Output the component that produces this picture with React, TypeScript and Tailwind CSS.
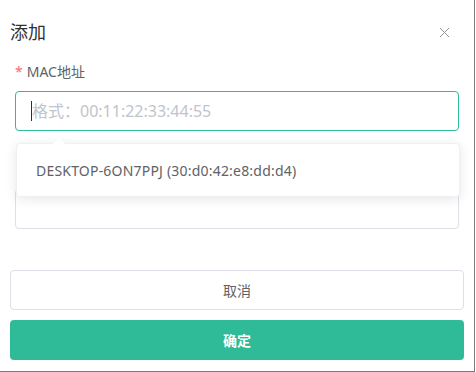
import { X } from 'lucide-react';

const font = { fontFamily: '"Noto Sans", "Noto Sans CJK SC", sans-serif' };

export default function App() {
  return (
    <div className="w-[476px] h-[372px] bg-white" style={font}>
      <div className="relative w-[475px] h-[372px] bg-white border-r border-b border-[#7a7a7a] flex flex-col">
        <div className="flex items-center justify-between pt-[20px] pl-[10px] pr-[21px]">
          <span className="text-[18px] leading-[24px] text-[#303133]">添加</span>
          <X className="w-[17px] h-[17px] text-[#909399]" strokeWidth={1.4} />
        </div>

        <div className="px-[15px] pt-[17px]">
          <div className="text-[14px] leading-[22px] text-[#606266]">
            <span className="text-[#f56c6c] mr-[4px]">*</span>MAC地址
          </div>
          <div className="mt-[8px] h-[40px] rounded-[4px] border border-[#2fbb97] flex items-center px-[15px]">
            <span className="w-px h-[20px] bg-[#303133]" />
            <span className="text-[16px] text-[#c0c4cc]">格式：00:11:22:33:44:55</span>
          </div>

          <div className="mt-[28px] h-[22px]" />
          <div className="mt-[8px] h-[40px] rounded-[4px] border border-[#dcdfe6]" />
        </div>

        <div className="px-[10px] mt-auto mb-[11px] flex flex-col gap-[10px]">
          <button className="h-[40px] rounded-[4px] border border-[#dcdfe6] bg-white text-[14px] text-[#606266]">
            取消
          </button>
          <button className="h-[40px] rounded-[4px] bg-[#2fbb97] text-[14px] font-bold text-white">
            确定
          </button>
        </div>

        <div className="absolute left-[16px] top-[143px] w-[444px] h-[54px] bg-white rounded-[4px] border border-[#eef0f4] shadow-[0_2px_12px_0_rgba(0,0,0,0.1)] flex items-center px-[19px]">
          <div className="absolute -top-[6px] left-[36px] w-0 h-0 border-x-[6px] border-x-transparent border-b-[6px] border-b-white" />
          <span className="text-[14px] tracking-[0.2px] text-[#606266]">DESKTOP-6ON7PPJ (30:d0:42:e8:dd:d4)</span>
        </div>
      </div>
    </div>
  );
}
